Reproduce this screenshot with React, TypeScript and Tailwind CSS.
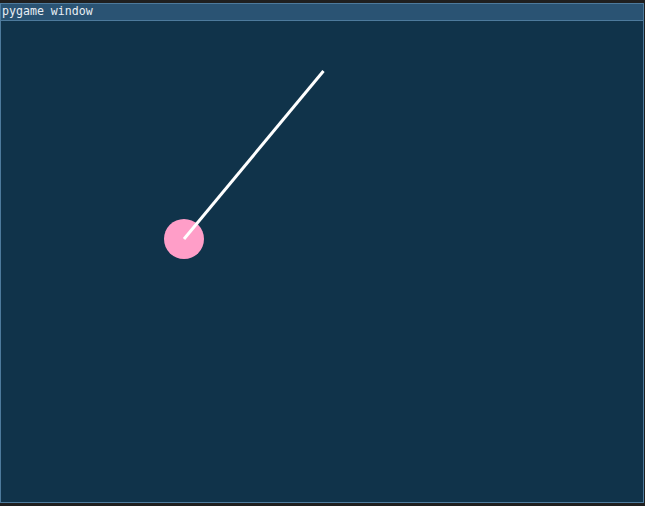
import React from "react";

export default function App() {
  return (
    <div className="w-[645px] h-[506px] bg-[#1f1f1f] pt-[3px] overflow-hidden">
      <div className="w-[644px] h-[500px] border border-[#4d7a9c] flex flex-col">
        <div
          className="h-[16px] bg-[#2a5373] border-b border-[#4d7a9c] box-content flex items-center pl-[1px] text-[11.6px] leading-none text-[#e8eef3]"
          style={{ fontFamily: '"DejaVu Sans Mono", monospace' }}
        >
          pygame window
        </div>
        <div className="flex-1 bg-[#10334a] relative">
          <svg className="absolute left-0 top-0" width="642" height="482" viewBox="0 0 642 482">
            <circle cx="183" cy="218" r="20" fill="#ff9ec8" />
            <line x1="183" y1="218" x2="322.5" y2="50" stroke="#ffffff" strokeWidth="3" />
          </svg>
        </div>
      </div>
    </div>
  );
}
